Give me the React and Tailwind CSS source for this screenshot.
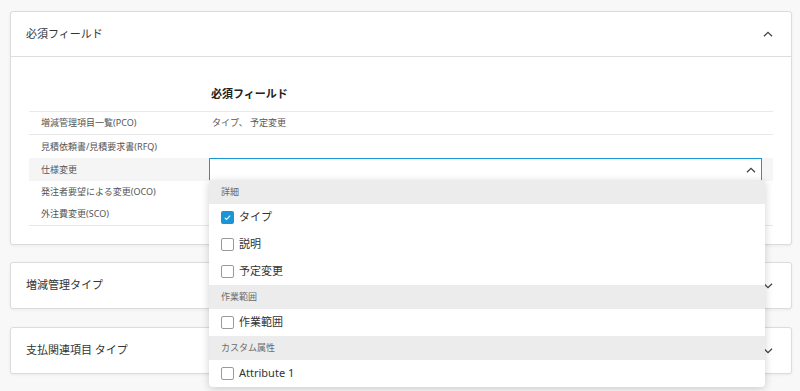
import React from 'react';

const font = { fontFamily: '"Noto Sans", "Noto Sans CJK JP", sans-serif' };

const Chevron = ({ up }) => (
  <svg viewBox="0 0 10 6" className="w-[10px] h-[6px]" fill="none" stroke="#444" strokeWidth="1.3">
    {up ? <path d="M1 5.3 5 1.3l4 4" /> : <path d="M1 0.7l4 4 4-4" />}
  </svg>
);

const Checkbox = ({ checked }) =>
  checked ? (
    <span className="flex h-[13px] w-[13px] items-center justify-center rounded-[2px] bg-[#1a96d4]">
      <svg viewBox="0 0 10 10" className="h-[9px] w-[9px]" fill="none" stroke="#fff" strokeWidth="1.2">
        <path d="M2 5.3 4 7.2 8 3" />
      </svg>
    </span>
  ) : (
    <span className="h-[13px] w-[13px] rounded-[2px] border border-[#9a9a9a] bg-white" />
  );

const menu = [
  { group: '詳細', items: [{ label: 'タイプ', checked: true }, { label: '説明' }, { label: '予定変更' }] },
  { group: '作業範囲', items: [{ label: '作業範囲' }] },
  { group: 'カスタム属性', items: [{ label: 'Attribute 1' }] },
];

const rows = [
  { label: '増減管理項目一覧(PCO)', value: 'タイプ、 予定変更', line: true, h: 'h-[23px]' },
  { label: '見積依頼書/見積要求書(RFQ)', h: 'h-[23px]' },
  { label: '仕様変更', select: true, h: 'h-[23px]' },
  { label: '発注者要望による変更(OCO)', h: 'h-[22px]' },
  { label: '外注費変更(SCO)', line: true, h: 'h-[23px]' },
];

const Dropdown = () => (
  <div className="absolute left-0 top-[22px] z-20 w-[556px] rounded-b-[4px] bg-white shadow-[0_2px_8px_rgba(0,0,0,0.18)]">
    {menu.map((g) => (
      <div key={g.group}>
        <div className="flex h-[24px] items-center bg-[#ececec] pl-[12px] text-[9px] text-[#6b6b6b]">{g.group}</div>
        {g.items.map((it) => (
          <div key={it.label} className="flex h-[27px] items-center gap-[5px] pl-[12px] text-[11px] text-[#333]">
            <Checkbox checked={it.checked} />
            <span>{it.label}</span>
          </div>
        ))}
      </div>
    ))}
  </div>
);

const CardHeader = ({ title, open }) => (
  <div className={`flex h-[45px] items-center justify-between pl-[15px] pr-[18px] ${open ? 'border-b border-[#dedede]' : ''}`}>
    <span className="text-[11px] text-[#333]">{title}</span>
    <Chevron up={open} />
  </div>
);

export default function App() {
  return (
    <div className="min-h-screen bg-[#f8f8f8] px-[10px] pt-[11px] pb-[10px]" style={font}>
      <div className="w-[782px] rounded-[3px] border border-[#dcdcdc] bg-white shadow-[0_1px_3px_rgba(0,0,0,0.06)]">
        <CardHeader title="必須フィールド" open />
        <div className="px-[18px] pt-[21px] pb-[18px]">
          <div className="flex h-[33px] items-center pl-[182px] text-[11px] font-bold text-[#222]">必須フィールド</div>
          <div className="border-t border-[#e8e8e8]">
            {rows.map((r) => (
              <div
                key={r.label}
                className={`flex items-center text-[9px] text-[#555] ${r.h} ${r.line ? 'border-b border-[#e8e8e8]' : ''} ${r.select ? 'bg-[#f5f5f5]' : ''}`}
              >
                <div className="w-[180px] pl-[12px]">{r.label}</div>
                {r.select ? (
                  <div className="relative flex-1 pr-[11px]">
                    <div className="flex h-[23px] items-center justify-end border border-[#1a96d4] bg-white pr-[5px]">
                      <Chevron up />
                    </div>
                    <Dropdown />
                  </div>
                ) : (
                  <div className="pl-[3px]">{r.value}</div>
                )}
              </div>
            ))}
          </div>
        </div>
      </div>
      <div className="mt-[17px] w-[782px] rounded-[3px] border border-[#dcdcdc] bg-white shadow-[0_1px_3px_rgba(0,0,0,0.06)]">
        <CardHeader title="増減管理タイプ" />
      </div>
      <div className="mt-[18px] w-[782px] rounded-[3px] border border-[#dcdcdc] bg-white shadow-[0_1px_3px_rgba(0,0,0,0.06)]">
        <CardHeader title="支払関連項目 タイプ" />
      </div>
    </div>
  );
}
